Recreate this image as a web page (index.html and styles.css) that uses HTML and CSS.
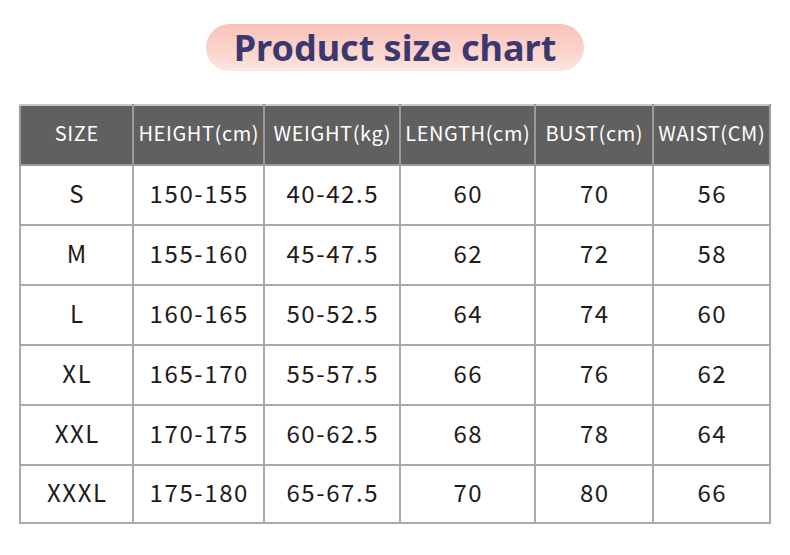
FILE: index.html
```html
<!DOCTYPE html>
<html>
<head>
<meta charset="utf-8">
<link rel="stylesheet" href="styles.css">
</head>
<body>
<div class="page">
  <div class="title-wrap"><h1 class="title">Product size chart</h1></div>
  <table class="chart">
    <colgroup>
      <col class="c1"><col class="c2"><col class="c3"><col class="c4"><col class="c5"><col class="c6">
    </colgroup>
    <thead>
      <tr><th>SIZE</th><th>HEIGHT(cm)</th><th>WEIGHT(kg)</th><th>LENGTH(cm)</th><th>BUST(cm)</th><th>WAIST(CM)</th></tr>
    </thead>
    <tbody>
      <tr><td>S</td><td>150-155</td><td>40-42.5</td><td>60</td><td>70</td><td>56</td></tr>
      <tr><td>M</td><td>155-160</td><td>45-47.5</td><td>62</td><td>72</td><td>58</td></tr>
      <tr><td>L</td><td>160-165</td><td>50-52.5</td><td>64</td><td>74</td><td>60</td></tr>
      <tr><td>XL</td><td>165-170</td><td>55-57.5</td><td>66</td><td>76</td><td>62</td></tr>
      <tr><td>XXL</td><td>170-175</td><td>60-62.5</td><td>68</td><td>78</td><td>64</td></tr>
      <tr class="last"><td>XXXL</td><td>175-180</td><td>65-67.5</td><td>70</td><td>80</td><td>66</td></tr>
    </tbody>
  </table>
</div>
</body>
</html>
```
FILE: styles.css
```css
html, body {
  margin: 0;
  padding: 0;
  background: #ffffff;
}
body {
  font-family: "Noto Sans CJK SC", "Noto Sans", sans-serif;
  color: #1f1a1a;
}
.page {
  width: 790px;
  height: 555px;
  overflow: hidden;
}
.title-wrap {
  display: flex;
  justify-content: center;
  padding: 24px 0 0 0;
}
.title {
  margin: 0;
  width: 378px;
  height: 47px;
  border-radius: 24px;
  background: linear-gradient(180deg, #f9c3bb 0%, #fbd3cb 55%, #fde6df 100%);
  color: #3b3870;
  font-family: "Noto Sans", "Open Sans", sans-serif;
  font-weight: 700;
  font-size: 36px;
  line-height: 47px;
  text-align: center;
}
.chart {
  margin: 33px 0 0 19px;
  width: 750px;
  border-collapse: collapse;
  table-layout: fixed;
}
.c1 { width: 113px; }
.c2 { width: 131px; }
.c3 { width: 136px; }
.c4 { width: 135px; }
.c5 { width: 118px; }
.c6 { width: 117px; }
.chart th, .chart td {
  border: 2px solid #a9a9a9;
  text-align: center;
  white-space: nowrap;
}
.chart th {
  background: #606060;
  color: #ffffff;
  font-weight: 400;
  font-size: 20px;
  letter-spacing: 0.6px;
  padding: 0 0 5px 0.6px;
  height: 53px;
  border-color: #9a9a9a;
  border-top-color: #c8c8c8;
}
.chart td {
  font-size: 24px;
  letter-spacing: 1.6px;
  padding: 0 0 5px 1.6px;
  height: 53px;
}
.chart tr.last td {
  height: 51px;
}
```
